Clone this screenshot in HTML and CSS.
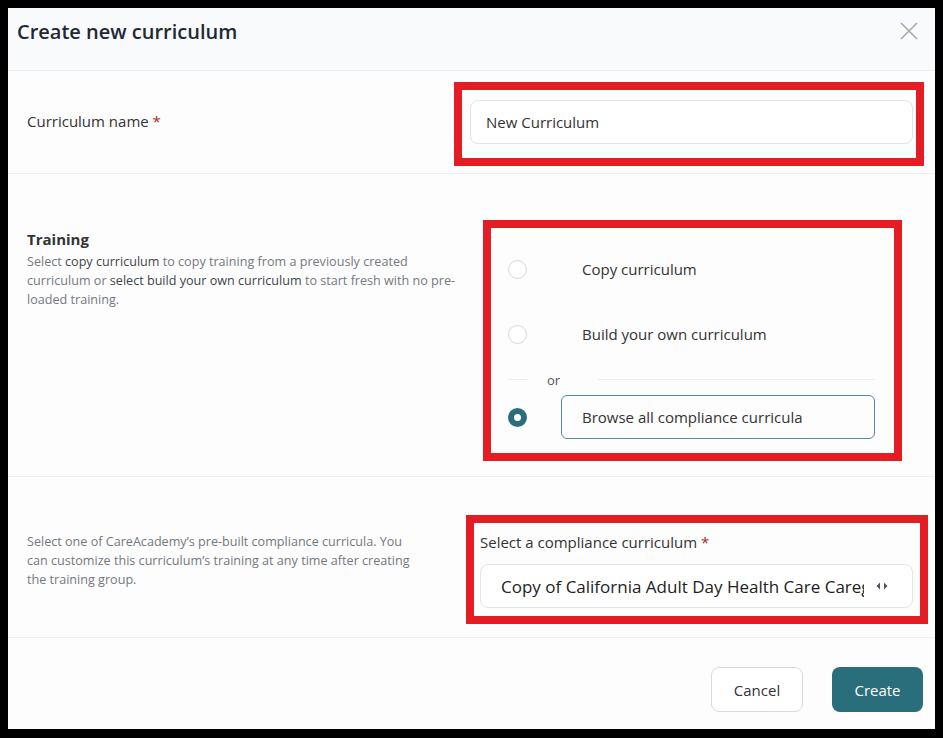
FILE: index.html
```html
<!DOCTYPE html>
<html lang="en">
<head>
    <meta charset="UTF-8">
    <meta name="viewport" content="width=device-width, initial-scale=1.0">
    <title>Create new curriculum</title>
    <link rel="stylesheet" href="styles.css">
</head>
<body>
    <div class="modal">
        <header class="modal-header">
            <h2>Create new curriculum</h2>
            <button type="button" class="close-btn" aria-label="Close">
                <svg width="18" height="18" viewBox="0 0 18 18"><path d="M1 1 L17 17 M17 1 L1 17" stroke="#a3a9b3" stroke-width="1.6" fill="none"/></svg>
            </button>
        </header>

        <section class="row row-name">
            <label class="row-label" for="curriculumName">Curriculum name <span class="req">*</span></label>
            <div class="name-field mark mark-name">
                <input type="text" id="curriculumName" class="text-input" value="New Curriculum">
            </div>
        </section>

        <section class="row row-training">
            <div class="info info-training">
                <h3>Training</h3>
                <p>Select <b>copy curriculum</b> to copy training from a previously created curriculum or <b>select build your own curriculum</b> to start fresh with no pre-loaded training.</p>
            </div>
            <div class="options mark mark-options">
                <label class="option">
                    <span class="radio"></span>
                    <span class="option-box">Copy curriculum</span>
                </label>
                <label class="option">
                    <span class="radio"></span>
                    <span class="option-box">Build your own curriculum</span>
                </label>
                <div class="or-divider">
                    <span class="or-line short"></span>
                    <span class="or-text">or</span>
                    <span class="or-line"></span>
                </div>
                <label class="option selected">
                    <span class="radio"></span>
                    <span class="option-box">Browse all compliance curricula</span>
                </label>
            </div>
        </section>

        <section class="row row-compliance">
            <div class="info info-compliance">
                <p>Select one of CareAcademy’s pre-built compliance curricula. You can customize this curriculum’s training at any time after creating the training group.</p>
            </div>
            <div class="compliance-field mark mark-compliance">
                <div class="field-label">Select a compliance curriculum <span class="req">*</span></div>
                <div class="select-box">
                    <span class="select-value">Copy of California Adult Day Health Care Caregiver Training</span>
                    <svg class="select-arrows" width="12" height="8" viewBox="0 0 12 8"><path d="M4 0.5 L0.5 4 L4 7.5 Z M8 0.5 L11.5 4 L8 7.5 Z" fill="#4b5563"/></svg>
                </div>
            </div>
        </section>

        <footer class="modal-footer">
            <button type="button" class="btn btn-cancel">Cancel</button>
            <button type="button" class="btn btn-create">Create</button>
        </footer>
    </div>
</body>
</html>
```

FILE: styles.css
```css
html {
    background: #000;
}
body {
    margin: 8px;
    font-family: "Open Sans", Arial, sans-serif;
    color: #333;
}
.modal {
    width: 927px;
    height: 721px;
    background: #fdfdfe;
    display: flex;
    flex-direction: column;
}
.modal-header {
    height: 62px;
    box-sizing: content-box;
    border-bottom: 1px solid #eaedf2;
    background: #f8fafc;
    display: flex;
    justify-content: space-between;
    align-items: flex-start;
    padding: 0 17px 0 9px;
}
.modal-header h2 {
    margin: 10px 0 0;
    font-size: 20px;
    line-height: 28px;
    font-weight: 600;
    color: #1f2933;
}
.close-btn {
    margin-top: 14px;
    padding: 0;
    border: none;
    background: none;
    width: 18px;
    height: 18px;
    cursor: pointer;
}
.row {
    display: flex;
    justify-content: space-between;
    padding: 0 22px 0 19px;
    border-bottom: 1px solid #eceef3;
    box-sizing: border-box;
}
.row-name {
    height: 103px;
    align-items: center;
}
.row-label {
    font-size: 15px;
    color: #333;
    margin-top: -2px;
}
.req {
    color: #b4232a;
}
.name-field {
    width: 443px;
}
.text-input {
    width: 100%;
    height: 44px;
    box-sizing: border-box;
    border: 1px solid #dfe4ec;
    border-radius: 8px;
    padding: 0 15px;
    font-family: inherit;
    font-size: 15px;
    color: #333;
    background: #fff;
}

/* annotation frames */
.mark {
    position: relative;
}
.mark::after {
    content: "";
    position: absolute;
    border: 8px solid #e31d23;
    pointer-events: none;
}
.mark-name::after {
    top: -18px;
    bottom: -22px;
    left: -16px;
    right: -11px;
}
.mark-options::after {
    top: -27px;
    bottom: -22px;
    left: -25px;
    right: -27px;
}
.mark-compliance::after {
    top: -16px;
    bottom: -16px;
    left: -14px;
    right: -15px;
}

.row-training {
    height: 303px;
    padding-top: 54px;
    align-items: flex-start;
}
.info h3 {
    margin: 0;
    font-size: 15px;
    line-height: 22px;
    font-weight: 700;
    color: #333;
}
.info p {
    margin: 0;
    font-size: 12.6px;
    line-height: 19px;
    color: #74787d;
}
.info b {
    font-weight: 500;
    color: #3f444a;
}
.info-training {
    width: 445px;
}
.info-training p {
    margin-top: 2px;
}
.options {
    width: 367px;
    margin-top: 19px;
    margin-right: 38px;
}
.option {
    display: flex;
    align-items: center;
    gap: 34px;
    cursor: pointer;
}
.option + .option {
    margin-top: 21px;
}
.radio {
    width: 19px;
    height: 19px;
    box-sizing: border-box;
    border-radius: 50%;
    border: 1px solid #d6d9de;
    background: #fff;
    flex-shrink: 0;
}
.option.selected .radio {
    border: 6px solid #2a6d7b;
    background: #fff;
}
.option-box {
    flex: 1;
    height: 44px;
    box-sizing: border-box;
    border: 1px solid transparent;
    border-radius: 6px;
    padding: 0 20px;
    display: flex;
    align-items: center;
    font-size: 15px;
    color: #333;
}
.option.selected .option-box {
    border-color: #4f8c98;
}
.or-divider {
    display: flex;
    align-items: center;
    height: 22px;
    margin: 12px 0 5px;
}
.or-line {
    flex: 1;
    height: 1px;
    background: #ebedf0;
}
.or-line.short {
    flex: none;
    width: 19px;
}
.or-text {
    font-size: 13px;
    color: #555;
    margin: 2px 38px 0 20px;
}

.row-compliance {
    height: 161px;
    padding-top: 53px;
    align-items: flex-start;
}
.info-compliance {
    width: 390px;
    padding-top: 2px;
}
.compliance-field {
    width: 433px;
    margin-top: 1px;
}
.field-label {
    font-size: 15px;
    line-height: 22px;
    color: #333;
}
.select-box {
    margin-top: 11px;
    height: 44px;
    box-sizing: border-box;
    border: 1px solid #e2e5ed;
    border-radius: 8px;
    background: #fff;
    display: flex;
    align-items: center;
    padding: 0 24px 0 20px;
}
.select-value {
    flex: 1;
    white-space: nowrap;
    overflow: hidden;
    font-size: 17px;
    color: #222;
    margin-right: 12px;
}
.select-arrows {
    flex-shrink: 0;
}

.modal-footer {
    flex: 1;
    display: flex;
    justify-content: flex-end;
    align-items: flex-start;
    gap: 29px;
    padding: 29px 12px 0 0;
}
.btn {
    height: 45px;
    width: 92px;
    border-radius: 8px;
    font-family: inherit;
    font-size: 15px;
    cursor: pointer;
}
.btn-cancel {
    background: #fff;
    border: 1px solid #d5d9e2;
    color: #333;
}
.btn-create {
    width: 91px;
    background: #2a6d7b;
    border: none;
    color: #fff;
}
```
